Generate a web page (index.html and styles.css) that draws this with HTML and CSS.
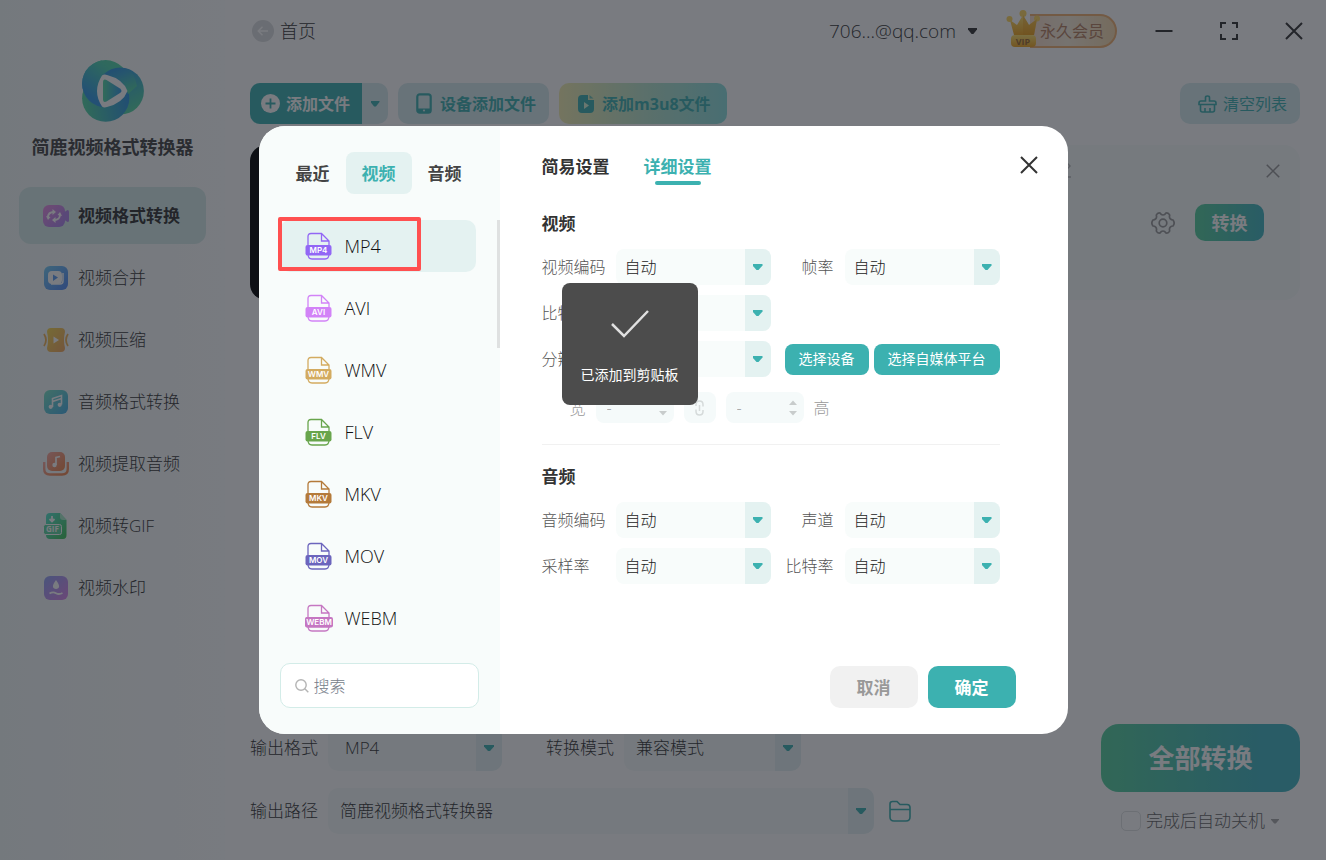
FILE: index.html
```html
<!DOCTYPE html>
<html lang="zh-CN">
<head>
  <title>简鹿视频格式转换器</title>
  <meta charset="UTF-8">
  <meta name="viewport" content="width=device-width, initial-scale=1">
  <link rel="stylesheet" href="styles.css">
</head>
<body>
  <!-- shared shapes and gradients -->
  <svg class="defs" width="0" height="0" aria-hidden="true">
    <defs>
      <linearGradient id="g-purple" x1="0" y1="0" x2="1" y2="1"><stop offset="0" stop-color="#ea8ce0"/><stop offset="1" stop-color="#a884ee"/></linearGradient>
      <linearGradient id="g-blue" x1="0" y1="0" x2="1" y2="1"><stop offset="0" stop-color="#74ccf4"/><stop offset="1" stop-color="#5488f5"/></linearGradient>
      <linearGradient id="g-yellow" x1="0" y1="0" x2="1" y2="1"><stop offset="0" stop-color="#f7d84e"/><stop offset="1" stop-color="#f2a55e"/></linearGradient>
      <linearGradient id="g-cyan" x1="0" y1="0" x2="1" y2="1"><stop offset="0" stop-color="#7be3c4"/><stop offset="1" stop-color="#45aee6"/></linearGradient>
      <linearGradient id="g-orange" x1="0" y1="0" x2="1" y2="1"><stop offset="0" stop-color="#f8a9a0"/><stop offset="1" stop-color="#f2864a"/></linearGradient>
      <linearGradient id="g-green" x1="0" y1="0" x2="1" y2="1"><stop offset="0" stop-color="#55e6cf"/><stop offset="1" stop-color="#41c356"/></linearGradient>
      <linearGradient id="g-violet" x1="0" y1="0" x2="1" y2="1"><stop offset="0" stop-color="#8fa4f5"/><stop offset="1" stop-color="#dd84ea"/></linearGradient>
      <linearGradient id="g-gold" x1="0" y1="0" x2="0" y2="1"><stop offset="0" stop-color="#ffe16b"/><stop offset="1" stop-color="#f0a51e"/></linearGradient>
      <linearGradient id="l-a" x1="0.8" y1="0" x2="0.2" y2="0.8"><stop offset="0" stop-color="#55d8a4"/><stop offset="0.3" stop-color="#4ed2b0"/><stop offset="1" stop-color="#3399e4"/></linearGradient>
      <linearGradient id="l-b" x1="0.2" y1="0" x2="0.7" y2="1"><stop offset="0" stop-color="#2f93e0"/><stop offset="0.3" stop-color="#3aa5d4"/><stop offset="1" stop-color="#55d8a0"/></linearGradient>
      <linearGradient id="l-c" x1="0" y1="0.7" x2="1" y2="0.5"><stop offset="0" stop-color="#55d8a0"/><stop offset="1" stop-color="#2f93e0"/></linearGradient>
      <linearGradient id="l-d" x1="0" y1="0" x2="1" y2="0"><stop offset="0" stop-color="#55d8a4"/><stop offset="1" stop-color="#3399e4"/></linearGradient>
      <clipPath id="logo-left"><rect x="0" y="0" width="20" height="48"/></clipPath>
    </defs>
    <symbol id="doc" viewBox="0 0 28 28">
      <path d="M3 13V4.500Q3 1.500 6 1.500H16.500L24 9V13M16.500 1.500V9H24M3 22Q3 27 7 27H20Q24 27 24 22" fill="none" stroke="currentColor" stroke-width="1.300"/>
      <rect x="0.500" y="13" width="26" height="10.500" rx="2" fill="currentColor"/>
    </symbol>
    <symbol id="cross" viewBox="0 0 18 18">
      <path d="M1 1L17 17M17 1L1 17" fill="none" stroke="currentColor" stroke-width="2"/>
    </symbol>
  </svg>

  <div class="app">
    <aside class="sidebar">
      <svg class="logo" width="62" height="62" viewBox="0 0 62 62" aria-hidden="true">
        <circle cx="23.700" cy="23.700" r="23.600" fill="url(#l-a)"/>
        <circle cx="38.300" cy="31" r="23.600" fill="url(#l-b)"/>
        <circle cx="23.700" cy="38.200" r="23.600" fill="url(#l-c)"/>
        <circle cx="23.700" cy="23.700" r="23.600" fill="url(#l-a)" clip-path="url(#logo-left)"/>
        <path d="M23 14.500Q30 6 46 9Q52 12 55 26L46 34Q42 18 25 15Z" fill="url(#l-b)"/>
        <path d="M20 15.500Q22 14 25 15Q41 19 45.500 31Q41 43 25 47Q22 48 20 46.500Q10 31 20 15.500Z" fill="#fff"/>
        <path d="M21 22.500Q21 18.500 24.500 20L38 28.500Q41 31 38 33L24.500 41.500Q21 43 21 39Z" fill="url(#l-d)"/>
      </svg>
      <h1 class="brand">简鹿视频格式转换器</h1>
      <nav class="nav">
        <a class="nav-item active" href="#">
          <svg width="26" height="26" viewBox="0 0 26 26" aria-hidden="true"><rect x="0" y="2" width="22" height="22" rx="6" fill="url(#g-purple)"/><path d="M20 10L24.500 7Q26 7 26 8.500V17.500Q26 19 24.500 19L20 16Z" fill="#b487ec"/><path d="M5 14.500Q5 9 11 9M17 11.500Q17 17 11 17" fill="none" stroke="#fff" stroke-width="1.800"/><path d="M9.500 6V12L13 9ZM12.500 14V20L9 17ZM3 13L5 17L7.500 14ZM19 13L17 9L14.500 12Z" fill="#fff"/></svg>
          视频格式转换
        </a>
        <a class="nav-item" href="#">
          <svg width="26" height="26" viewBox="0 0 26 26" aria-hidden="true"><rect x="1" y="1" width="24" height="24" rx="6" fill="url(#g-blue)"/><rect x="5" y="6" width="14" height="13" rx="4" fill="#fff"/><path d="M8 19H17Q20 19 20 16V8" fill="none" stroke="#fff" stroke-width="1.500"/><path d="M10 9.500L15 12.500L10 16Z" fill="#5c9cf0"/></svg>
          视频合并
        </a>
        <a class="nav-item" href="#">
          <svg width="26" height="26" viewBox="0 0 26 26" aria-hidden="true"><path d="M8 1H18Q22 1 22 5Q20 13 22 21Q22 25 18 25H8Q4 25 4 21Q6 13 4 5Q4 1 8 1Z" fill="url(#g-yellow)"/><path d="M1 7Q5 13 1 19M25 7Q21 13 25 19" fill="none" stroke="#f2b455" stroke-width="1.800"/><path d="M10.500 9.500L16 13L10.500 16.500Z" fill="#fff"/></svg>
          视频压缩
        </a>
        <a class="nav-item" href="#">
          <svg width="26" height="26" viewBox="0 0 26 26" aria-hidden="true"><rect x="1" y="1" width="24" height="24" rx="6" fill="url(#g-cyan)"/><path d="M9.500 18V9.500L18.500 6.500V15.500M9.500 12.500L18.500 9.500" fill="none" stroke="#fff" stroke-width="1.600"/><circle cx="7.700" cy="17.800" r="2.100" fill="#fff"/><circle cx="16.700" cy="15.800" r="2.100" fill="#fff"/></svg>
          音频格式转换
        </a>
        <a class="nav-item" href="#">
          <svg width="26" height="26" viewBox="0 0 26 26" aria-hidden="true"><rect x="4" y="1" width="18" height="19" rx="5" fill="url(#g-orange)"/><path d="M1.200 11V18Q1.200 23.500 7 23.500H19Q24.800 23.500 24.800 18V11" fill="none" stroke="url(#g-orange)" stroke-width="2.400"/><path d="M13 14V6.500L17 5.500" fill="none" stroke="#fff" stroke-width="1.700"/><circle cx="11.500" cy="14" r="2.200" fill="#fff"/></svg>
          视频提取音频
        </a>
        <a class="nav-item" href="#">
          <svg width="26" height="26" viewBox="0 0 26 26" aria-hidden="true"><path d="M7 0H17L23.500 7V22Q23.500 26 20 26H7Q3 26 3 22V4Q3 0 7 0Z" fill="url(#g-green)"/><path d="M17 0V4Q17 7 20 7H23.500Z" fill="#a8ecc8"/><path d="M9 3V8M6.500 6L9 8.500L11.500 6" fill="none" stroke="#fff" stroke-width="1.800"/><rect x="0.500" y="11.500" width="18" height="10" rx="2" fill="#5ed6a0" stroke="#fff"/><text x="9.500" y="19.400" font-size="8" font-weight="700" text-anchor="middle" fill="#fff">GIF</text></svg>
          视频转GIF
        </a>
        <a class="nav-item" href="#">
          <svg width="26" height="26" viewBox="0 0 26 26" aria-hidden="true"><rect x="1" y="1" width="24" height="24" rx="6" fill="url(#g-violet)"/><path d="M13 5Q17.500 11 15.500 13Q13 15 10.500 13Q8.500 11 13 5Z" fill="#fff"/><path d="M6.500 18.500Q10 16.500 13 18.200T19.500 18" fill="none" stroke="#fff" stroke-width="1.800"/></svg>
          视频水印
        </a>
      </nav>
    </aside>

    <main class="main">
      <header class="topbar">
        <a class="back" href="#">
          <svg width="22" height="22" viewBox="0 0 22 22" aria-hidden="true"><circle cx="11" cy="11" r="11" fill="#dcdedf"/><path d="M16 11H6.500M10.500 6.800L6.300 11L10.500 15.200" fill="none" stroke="#fff" stroke-width="1.500"/></svg>
          首页
        </a>
        <button class="account" type="button">706...@qq.com <i class="caret"></i></button>
        <div class="vip">
          <svg class="crown" width="36" height="40" viewBox="0 0 36 40" aria-hidden="true"><path d="M4 11L11 16L17 6L23 16L31 10L28 26H8Z" fill="url(#g-gold)"/><circle cx="3.500" cy="10" r="3" fill="#ffd75e"/><circle cx="17" cy="4.500" r="3.500" fill="#ffd75e"/><circle cx="31" cy="9.500" r="3" fill="#ffd75e"/><path d="M17 6V26H28L31 10L23 16Z" fill="#e89b1c" opacity="0.400"/><rect x="5" y="26" width="25" height="12" rx="4" fill="url(#g-gold)"/><text x="17" y="35.500" font-size="9" font-weight="700" text-anchor="middle" fill="#9a6a30">VIP</text></svg>
          永久会员
        </div>
        <div class="window-buttons">
          <button type="button" aria-label="最小化"><svg width="18" height="18" viewBox="0 0 18 18"><path d="M0.500 9H17.500" stroke="currentColor" stroke-width="2"/></svg></button>
          <button type="button" aria-label="最大化"><svg width="18" height="18" viewBox="0 0 18 18"><path d="M1 6V1H6M12 1H17V6M17 12V17H12M6 17H1V12" fill="none" stroke="currentColor" stroke-width="2"/></svg></button>
          <button type="button" aria-label="关闭"><svg width="18" height="18"><use href="#cross"/></svg></button>
        </div>
      </header>

      <div class="toolbar">
        <div class="split">
          <button class="add" type="button">
            <svg width="19" height="19" viewBox="0 0 19 19" aria-hidden="true"><circle cx="9.500" cy="9.500" r="9.500" fill="#fff"/><path d="M9.500 4.500V14.500M4.500 9.500H14.500" stroke="#3cb1b0" stroke-width="1.800"/></svg>
            添加文件
          </button>
          <button class="more" type="button" aria-label="更多"><i class="caret"></i></button>
        </div>
        <button class="tool" type="button">
          <svg width="16" height="21" viewBox="0 0 16 21" aria-hidden="true"><rect x="1.300" y="1.300" width="13.400" height="18.400" rx="2.500" fill="none" stroke="currentColor" stroke-width="2.200"/><path d="M1 15.500H15V19H1Z" fill="currentColor"/><circle cx="8" cy="17.500" r="1.100" fill="#d3e9ec"/></svg>
          设备添加文件
        </button>
        <button class="tool m3u8" type="button">
          <svg width="16" height="19" viewBox="0 0 16 19" aria-hidden="true"><path d="M4 1H10V6H16V15Q16 19 12 19H4Q0 19 0 15V5Q0 1 4 1Z" fill="currentColor"/><path d="M11.500 1L15.500 4.500H11.500Z" fill="currentColor" opacity="0.700"/><path d="M6 8L11 11.500L6 15Z" fill="#d9f5d8"/></svg>
          添加m3u8文件
        </button>
        <button class="tool clear" type="button">
          <svg width="19" height="18" viewBox="0 0 19 18" aria-hidden="true"><path d="M7.500 6V2.500Q7.500 1 9.500 1Q11.500 1 11.500 2.500V6H16Q18 6 18 8V9.500H1V8Q1 6 3 6ZM2.500 10V15Q2.500 17 4.500 17H14.500Q16.500 17 16.500 15V10M7 13V17M12 13V17" fill="none" stroke="currentColor" stroke-width="1.600"/></svg>
          清空列表
        </button>
      </div>

      <section class="file-list">
        <article class="file">
          <div class="thumb"></div>
          <div class="file-body">
            <button class="edit" type="button" aria-label="重命名"><svg width="15" height="16" viewBox="0 0 15 16"><path d="M1 15H14M2 12V9L10 1L13 4L5 12Z" fill="none" stroke="currentColor" stroke-width="1.500"/></svg></button>
          </div>
          <div class="file-actions">
            <button class="remove" type="button" aria-label="移除"><svg width="14" height="14"><use href="#cross"/></svg></button>
            <div class="file-run">
              <button class="gear" type="button" aria-label="设置"><svg width="24" height="24" viewBox="0 0 24 24"><path d="M9 2Q10.200 4 12 4Q13.800 4 15 2Q17.500 1.500 18.700 4Q18 6.500 19.300 7.900Q20.300 9 22 9Q24.300 12 22 15Q20.300 15 19.300 16.100Q18 17.500 18.700 20Q17.500 22.500 15 22Q13.800 20 12 20Q10.200 20 9 22Q6.500 22.500 5.300 20Q6 17.500 4.700 16.100Q3.700 15 2 15Q-0.300 12 2 9Q3.700 9 4.700 7.900Q6 6.500 5.300 4Q6.500 1.500 9 2Z" fill="none" stroke="currentColor" stroke-width="1.700"/><circle cx="12" cy="12" r="3.800" fill="none" stroke="currentColor" stroke-width="1.700"/></svg></button>
              <button class="convert" type="button">转换</button>
            </div>
          </div>
        </article>
      </section>

      <footer class="output">
        <div class="output-fields">
          <div class="output-row">
            <label for="format">输出格式</label>
            <div class="select large format"><select id="format"><option>MP4</option></select></div>
            <label class="mode-label" for="mode">转换模式</label>
            <div class="select large mode"><select id="mode"><option>兼容模式</option></select></div>
          </div>
          <div class="output-row">
            <label for="path">输出路径</label>
            <div class="select large path"><select id="path"><option>简鹿视频格式转换器</option></select></div>
            <button class="folder" type="button" aria-label="打开文件夹"><svg width="22" height="22" viewBox="0 0 22 22"><path d="M1 17V4Q1 1.500 3.500 1.500H8L11 4.500H18Q21 4.500 21 7.500V17Q21 21 17 21H5Q1 21 1 17ZM1 9.500H21" fill="none" stroke="currentColor" stroke-width="1.600"/></svg></button>
          </div>
        </div>
        <div class="output-run">
          <button class="convert-all" type="button">全部转换</button>
          <div class="shutdown"><input type="checkbox" id="shutdown"><label for="shutdown">完成后自动关机</label><i class="caret"></i></div>
        </div>
      </footer>
    </main>
  </div>

  <div class="overlay">
    <div class="modal" role="dialog" aria-label="输出设置">
      <div class="formats">
        <div class="format-tabs">
          <button type="button">最近</button>
          <button class="active" type="button">视频</button>
          <button type="button">音频</button>
        </div>
        <ul class="format-list">
          <li><a class="active" href="#"><svg class="mp4" width="28" height="28" viewBox="0 0 28 28"><use href="#doc"/><text x="13.500" y="21">MP4</text></svg>MP4</a></li>
          <li><a href="#"><svg class="avi" width="28" height="28" viewBox="0 0 28 28"><use href="#doc"/><text x="13.500" y="21">AVI</text></svg>AVI</a></li>
          <li><a href="#"><svg class="wmv" width="28" height="28" viewBox="0 0 28 28"><use href="#doc"/><text x="13.500" y="21">WMV</text></svg>WMV</a></li>
          <li><a href="#"><svg class="flv" width="28" height="28" viewBox="0 0 28 28"><use href="#doc"/><text x="13.500" y="21">FLV</text></svg>FLV</a></li>
          <li><a href="#"><svg class="mkv" width="28" height="28" viewBox="0 0 28 28"><use href="#doc"/><text x="13.500" y="21">MKV</text></svg>MKV</a></li>
          <li><a href="#"><svg class="mov" width="28" height="28" viewBox="0 0 28 28"><use href="#doc"/><text x="13.500" y="21">MOV</text></svg>MOV</a></li>
          <li><a href="#"><svg class="webm" width="28" height="28" viewBox="0 0 28 28"><use href="#doc"/><rect x="0" y="13" width="28" height="10.500" rx="2" fill="currentColor"/><text x="14" y="21">WEBM</text></svg>WEBM</a></li>
        </ul>
        <div class="search">
          <svg width="14" height="14" viewBox="0 0 14 14" aria-hidden="true"><circle cx="6" cy="6" r="5.200" fill="none" stroke="#b4b4b4" stroke-width="1.400"/><path d="M9.800 9.800L13.300 13.300" stroke="#b4b4b4" stroke-width="1.400"/></svg>
          <input type="text" placeholder="搜索" aria-label="搜索">
        </div>
        <div class="scrollbar"></div>
        <div class="mark"></div>
      </div>

      <div class="settings">
        <div class="settings-head">
          <button class="settings-tab" type="button">简易设置</button>
          <button class="settings-tab active" type="button">详细设置</button>
          <button class="close" type="button" aria-label="关闭"><svg width="18" height="18"><use href="#cross"/></svg></button>
        </div>

        <h2>视频</h2>
        <div class="fields">
          <label for="vcodec">视频编码</label>
          <div class="select"><select id="vcodec"><option>自动</option></select></div>
          <label class="right" for="fps">帧率</label>
          <div class="select"><select id="fps"><option>自动</option></select></div>

          <label for="vbitrate">比特率</label>
          <div class="select"><select id="vbitrate"><option>自动</option></select></div>
          <span></span>
          <span></span>

          <label for="resolution">分辨率</label>
          <div class="select"><select id="resolution"><option>自动</option></select></div>
          <div class="presets">
            <button type="button">选择设备</button>
            <button type="button">选择自媒体平台</button>
          </div>
        </div>
        <div class="size">
          <label for="width">宽</label>
          <div class="spin"><input type="text" id="width" value="-" disabled><svg width="8" height="16" viewBox="0 0 8 16"><path d="M0 5L4 0.500L8 5ZM0 11L4 15.500L8 11Z"/></svg></div>
          <button class="link" type="button" aria-label="锁定比例" disabled><svg width="12" height="16" viewBox="0 0 12 16"><path d="M2 6V4.500Q2 1 5.500 1Q9 1 9 4.500V6.500M2 9.500V11.500Q2 15 5.500 15Q9 15 9 11.500V10M5.500 5V11" fill="none" stroke="#d5dada" stroke-width="1.500"/></svg></button>
          <div class="spin"><input type="text" id="height" value="-" disabled><svg width="8" height="16" viewBox="0 0 8 16"><path d="M0 5L4 0.500L8 5ZM0 11L4 15.500L8 11Z"/></svg></div>
          <label for="height">高</label>
        </div>

        <h2 class="audio">音频</h2>
        <div class="fields">
          <label for="acodec">音频编码</label>
          <div class="select"><select id="acodec"><option>自动</option></select></div>
          <label class="right" for="channels">声道</label>
          <div class="select"><select id="channels"><option>自动</option></select></div>

          <label for="rate">采样率</label>
          <div class="select"><select id="rate"><option>自动</option></select></div>
          <label class="right" for="abitrate">比特率</label>
          <div class="select"><select id="abitrate"><option>自动</option></select></div>
        </div>

        <div class="modal-actions">
          <button class="cancel" type="button">取消</button>
          <button class="confirm" type="button">确定</button>
        </div>
      </div>

      <div class="toast" role="status">
        <svg width="40" height="30" viewBox="0 0 40 30" aria-hidden="true"><path d="M2 15L14 27L38 2" fill="none" stroke="#e0e0e0" stroke-width="2.500"/></svg>
        已添加到剪贴板
      </div>
    </div>
  </div>
</body>
</html>
```

FILE: styles.css
```css
* {
  box-sizing: border-box;
}

body {
  margin: 0;
  font-family: "Open Sans", "Noto Sans CJK SC", sans-serif;
  font-size: 17px;
  font-weight: 300;
  line-height: 24px;
  color: #333;
  background: #fff;
}

button, input, select {
  font: inherit;
  color: inherit;
  border: none;
  background: none;
  margin: 0;
  padding: 0;
}

button {
  cursor: pointer;
  white-space: nowrap;
}

a {
  color: inherit;
  text-decoration: none;
}

svg {
  display: block;
  flex: none;
}

h1, h2, ul {
  margin: 0;
  padding: 0;
}

.defs {
  position: absolute;
}

.app {
  display: flex;
  min-height: 100vh;
}

/* Sidebar */
.sidebar {
  flex: none;
  width: 225px;
  padding: 60px 19px 0;
  background: linear-gradient(90deg, #f4faf8, #fdfefe);
}

.logo {
  margin: 0 auto;
}

.brand {
  margin-top: 13px;
  font-size: 18px;
  font-weight: 700;
  text-align: center;
  color: #444;
}

.nav {
  display: flex;
  flex-direction: column;
  gap: 5px;
  margin-top: 28px;
}

.nav-item {
  display: flex;
  align-items: center;
  gap: 9px;
  height: 57px;
  padding: 1px 24px 0;
  border-radius: 12px;
}

.nav-item.active {
  background: #d6ece9;
  font-weight: 700;
}

/* Main area */
.main {
  display: flex;
  flex-direction: column;
  flex: 1;
  min-width: 0;
  padding: 0 26px 26px 25px;
}

.topbar {
  display: flex;
  align-items: center;
  height: 62px;
  margin-right: -3px;
}

.back {
  display: flex;
  align-items: center;
  gap: 6px;
  margin: 0 auto 0 2px;
  font-size: 18px;
}

.caret {
  display: inline-block;
  width: 9px;
  height: 6px;
  background: currentColor;
  clip-path: polygon(0 0, 100% 0, 100% 25%, 60% 100%, 40% 100%, 0 25%);
}

.account {
  display: flex;
  align-items: center;
  gap: 12px;
  font-size: 19px;
}

.vip {
  position: relative;
  height: 34px;
  margin: 0 38px 0 53px;
  padding: 3px 11px 0 10px;
  border: 2px solid #f0b070;
  border-left: none;
  border-radius: 0 17px 17px 0;
  background: linear-gradient(90deg, #f8dcc8, #f8ecd8 45%, #f5d9ac);
  font-size: 16px;
  font-weight: 400;
  color: #b5805f;
}

.crown {
  position: absolute;
  left: -24px;
  top: -7px;
}

.window-buttons {
  display: flex;
  gap: 47px;
}

.toolbar {
  display: flex;
  gap: 10px;
  margin-top: 21px;
  font-size: 16px;
  font-weight: 700;
}

.split {
  display: flex;
  border-radius: 10px;
  overflow: hidden;
}

.add {
  display: flex;
  align-items: center;
  gap: 6px;
  width: 112px;
  padding-left: 11px;
  background: #3cb1b0;
  color: #fff;
}

.more {
  width: 26px;
  background: #d6ebee;
  color: #3cb1b0;
}

.more .caret {
  margin-bottom: 3px;
}

.tool {
  display: flex;
  align-items: center;
  gap: 8px;
  height: 41px;
  padding: 0 13px 0 18px;
  border-radius: 10px;
  background: #d6ebee;
  color: #3cb1b0;
}

.m3u8 {
  padding: 0 16px 0 19px;
  background: linear-gradient(90deg, #f3efb0, #b9e4cc 50%, #8ce0de);
}

.clear {
  margin-left: auto;
  gap: 6px;
  font-weight: 400;
}

.file-list {
  flex: 1;
  margin-top: 21px;
}

.file {
  display: flex;
  height: 155px;
  border-radius: 16px;
  background: #f7fcfb;
  overflow: hidden;
}

.thumb {
  width: 240px;
  background: #000;
}

.file-body {
  flex: 1;
  padding: 17px 230px 0 0;
}

.edit {
  display: block;
  margin-left: auto;
  color: #bbb;
}

.file-actions {
  display: flex;
  flex-direction: column;
  align-items: flex-end;
  gap: 26px;
  padding-top: 19px;
  margin-left: -151px;
}

.remove {
  margin-right: 20px;
  color: #999;
}

.file-run {
  display: flex;
  align-items: center;
  gap: 20px;
  margin-right: 36px;
}

.gear {
  color: #999;
}

.convert {
  width: 69px;
  height: 37px;
  border-radius: 10px;
  background: linear-gradient(90deg, #55cf9c, #41b5c0);
  color: #fff;
  font-size: 18px;
  font-weight: 700;
}

/* Output settings at the bottom */
.output {
  display: flex;
  justify-content: space-between;
}

.output-fields {
  display: flex;
  flex-direction: column;
  gap: 17px;
  padding-top: 1px;
}

.output-row {
  display: flex;
  align-items: center;
}

.output-row label {
  width: 78px;
}

.output-row .mode-label {
  margin-left: 44px;
}

.folder {
  margin-left: 15px;
  color: #3cb1b0;
}

.output-run {
  width: 199px;
}

.convert-all {
  width: 100%;
  height: 68px;
  border-radius: 18px;
  background: linear-gradient(90deg, #55cf9c, #41b5c0 80%);
  color: #fff;
  font-size: 26px;
  font-weight: 700;
}

.shutdown {
  display: flex;
  align-items: center;
  margin: 17px 0 0 20px;
  color: #666;
}

.shutdown input {
  appearance: none;
  width: 20px;
  height: 20px;
  margin-right: 5px;
  border: 1px solid #dfe2e2;
  border-radius: 5px;
}

.shutdown .caret {
  width: 8px;
  height: 5px;
  margin-left: 6px;
  background: #aaa;
}

/* Drop-downs */
.select {
  position: relative;
  height: 36px;
  border-radius: 8px;
  background: #f8fcfb;
  overflow: hidden;
}

.select select {
  appearance: none;
  width: 100%;
  height: 100%;
  padding: 0 34px 0 9px;
  cursor: pointer;
}

.select::before {
  content: "";
  position: absolute;
  top: 0;
  right: 0;
  width: 26px;
  height: 100%;
  background: #e4f2f1;
  pointer-events: none;
}

.select::after {
  content: "";
  position: absolute;
  top: calc(50% - 3px);
  right: 8px;
  width: 10px;
  height: 6px;
  background: #3cb1b0;
  clip-path: polygon(0 0, 100% 0, 100% 25%, 60% 100%, 40% 100%, 0 25%);
  pointer-events: none;
}

.select.large {
  height: 46px;
  border-radius: 10px;
  background: #f6fbfa;
}

.select.large::before {
  background: #e4f1f3;
}

.select.large select {
  padding-left: 12px;
}

.format {
  width: 174px;
}

.select.format select {
  padding-left: 17px;
}

.mode {
  width: 177px;
}

.path {
  width: 546px;
}

/* Settings dialog */
.overlay {
  position: fixed;
  inset: 0;
  display: flex;
  align-items: center;
  justify-content: center;
  background: rgba(24, 28, 36, 0.58);
}

.modal {
  position: relative;
  display: flex;
  width: 809px;
  border-radius: 26px;
  background: #fff;
}

.formats {
  position: relative;
  width: 241px;
  padding: 26px 21px;
  border-radius: 26px 0 0 26px;
  background: #f8fcfb;
}

.format-tabs {
  display: flex;
}

.format-tabs button {
  width: 66px;
  height: 42px;
  padding-top: 2px;
  border-radius: 8px;
  font-weight: 700;
  color: #444;
}

.format-tabs .active {
  background: #e4f2f1;
  color: #3cb1b0;
}

.format-list {
  display: flex;
  flex-direction: column;
  gap: 10px;
  width: 196px;
  margin: 26px 0 19px;
  list-style: none;
}

.format-list a {
  display: flex;
  align-items: center;
  gap: 12px;
  height: 52px;
  padding-left: 25px;
  border-radius: 10px;
  font-size: 18px;
  color: #111;
}

.format-list a.active {
  background: #e4f2f1;
}

.format-list text {
  font-family: Inter, sans-serif;
  font-size: 8px;
  font-weight: 600;
  text-anchor: middle;
  fill: #fff;
}

.mp4 {
  color: #9267f5;
}

.avi {
  color: #d283f7;
}

.wmv {
  color: #d3ab60;
}

.flv {
  color: #68a54c;
}

.mkv {
  color: #b47a3a;
}

.mov {
  color: #6c65bd;
}

.webm {
  color: #c577c2;
}

.search {
  display: flex;
  align-items: center;
  gap: 5px;
  height: 45px;
  padding: 0 14px;
  border: 1px solid #d3ece8;
  border-radius: 10px;
  background: #fff;
  font-size: 16px;
}

.search input {
  width: 100%;
  outline: none;
}

.search input::placeholder {
  color: #757c88;
}

.scrollbar {
  position: absolute;
  top: 94px;
  right: 0;
  width: 3px;
  height: 128px;
  background: #dfe1e1;
}

.mark {
  position: absolute;
  top: 91px;
  left: 19px;
  width: 143px;
  height: 54px;
  border: 4px solid #ff5050;
  border-radius: 2px;
}

.settings {
  display: flex;
  flex-direction: column;
  flex: 1;
  padding: 26px 52px 26px 42px;
  font-size: 16px;
}

.settings-head {
  display: flex;
  gap: 34px;
  margin-right: -22px;
}

.settings-tab {
  display: flex;
  flex-direction: column;
  align-items: center;
  gap: 2px;
  padding-top: 3px;
  font-size: 17px;
  font-weight: 700;
}

.settings-tab.active {
  color: #3cb1b0;
}

.settings-tab.active::after {
  content: "";
  width: 46px;
  height: 4px;
  border-radius: 2px;
  background: #3cb1b0;
}

.close {
  align-self: flex-start;
  margin: 4px 0 0 auto;
}

h2 {
  margin: 27px 0 13px;
  font-size: 17px;
  font-weight: 700;
}

.fields {
  display: grid;
  grid-template-columns: 74px 155px 74px 155px;
  row-gap: 10px;
  align-items: center;
  color: #222;
}

.fields label {
  color: #555;
}

.fields .right {
  padding-right: 11px;
  text-align: right;
}

.presets {
  display: flex;
  justify-content: space-between;
  grid-column: 3 / 5;
  padding-left: 14px;
}

.presets button {
  height: 31px;
  padding: 0 14px;
  border-radius: 8px;
  background: #3cb1b0;
  color: #fff;
  font-size: 14px;
  font-weight: 400;
}

.size {
  display: flex;
  align-items: center;
  gap: 10px;
  width: 458px;
  padding: 15px 0 21px 28px;
  border-bottom: 1px solid #f1f1f1;
  color: #999;
}

.spin {
  display: flex;
  align-items: center;
  width: 78px;
  height: 31px;
  padding: 0 7px 0 11px;
  border-radius: 8px;
  background: #f5fafa;
}

.spin input {
  width: 100%;
  min-width: 0;
}

.spin path {
  fill: #c8cccc;
}

.link {
  display: flex;
  align-items: center;
  justify-content: center;
  width: 32px;
  height: 31px;
  border-radius: 8px;
  background: #f5fafa;
}

h2.audio {
  margin-top: 20px;
}

.modal-actions {
  display: flex;
  justify-content: flex-end;
  gap: 10px;
  margin-top: auto;
}

.modal-actions button {
  width: 88px;
  height: 42px;
  padding-top: 2px;
  border-radius: 10px;
  font-size: 17px;
  font-weight: 700;
}

.cancel {
  background: #f1f1f1;
  color: #999;
}

.confirm {
  background: #3cb1b0;
  color: #fff;
}

.toast {
  position: absolute;
  top: 157px;
  left: 303px;
  display: flex;
  flex-direction: column;
  align-items: center;
  gap: 24px;
  width: 136px;
  height: 122px;
  padding-top: 26px;
  border-radius: 8px;
  background: #4c4c4c;
  color: #fff;
  font-size: 14px;
  font-weight: 400;
}
```
